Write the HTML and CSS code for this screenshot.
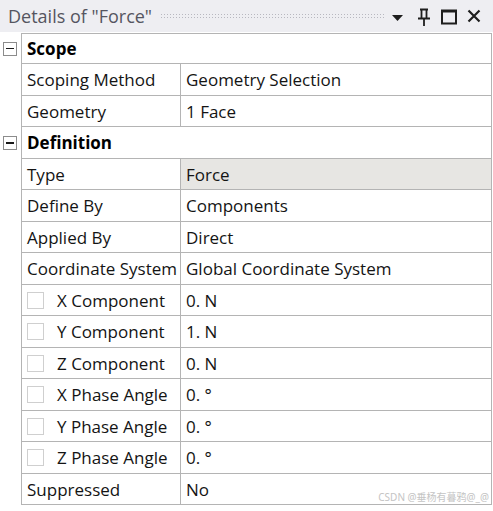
FILE: index.html
```html
<!DOCTYPE html>
<html>
<head>
<meta charset="utf-8">
<link rel="stylesheet" href="styles.css">
</head>
<body>
<div class="panel">
  <div class="titlebar">
    <span class="title">Details of "Force"</span>
    <span class="grip"></span>
    <span class="tb-icons">
      <svg class="ic-drop" width="11" height="6" viewBox="0 0 11 6"><path d="M0 0H11L5.5 6Z" fill="#1e1e1e"/></svg>
      <svg class="ic-pin" width="14" height="18" viewBox="0 0 14 18"><path d="M3 1.5H11M4.5 1.5V10M9.5 1.5V10M1 10.5H13M7 10.5V18" stroke="#1e1e1e" stroke-width="1.8" fill="none"/></svg>
      <svg class="ic-max" width="16" height="16" viewBox="0 0 16 16"><rect x="1" y="1.5" width="14" height="13" stroke="#1e1e1e" stroke-width="2" fill="none"/><path d="M1 2.5H15" stroke="#1e1e1e" stroke-width="2"/></svg>
      <svg class="ic-close" width="14" height="14" viewBox="0 0 14 14"><path d="M1.5 1.5L12.5 12.5M12.5 1.5L1.5 12.5" stroke="#1e1e1e" stroke-width="2.2"/></svg>
    </span>
  </div>
  <div class="sheet">
    <div class="row first">
      <div class="gut"><span class="exp"></span></div>
      <div class="cat">Scope</div>
    </div>
    <div class="row">
      <div class="gut"></div>
      <div class="name">Scoping Method</div>
      <div class="val">Geometry Selection</div>
    </div>
    <div class="row">
      <div class="gut"></div>
      <div class="name">Geometry</div>
      <div class="val">1 Face</div>
    </div>
    <div class="row">
      <div class="gut"><span class="exp"></span></div>
      <div class="cat">Definition</div>
    </div>
    <div class="row">
      <div class="gut"></div>
      <div class="name">Type</div>
      <div class="val shaded">Force</div>
    </div>
    <div class="row">
      <div class="gut"></div>
      <div class="name">Define By</div>
      <div class="val">Components</div>
    </div>
    <div class="row">
      <div class="gut"></div>
      <div class="name">Applied By</div>
      <div class="val">Direct</div>
    </div>
    <div class="row">
      <div class="gut"></div>
      <div class="name">Coordinate System</div>
      <div class="val">Global Coordinate System</div>
    </div>
    <div class="row">
      <div class="gut"></div>
      <div class="name chk"><span class="box"></span>X Component</div>
      <div class="val">0. N</div>
    </div>
    <div class="row">
      <div class="gut"></div>
      <div class="name chk"><span class="box"></span>Y Component</div>
      <div class="val">1. N</div>
    </div>
    <div class="row">
      <div class="gut"></div>
      <div class="name chk"><span class="box"></span>Z Component</div>
      <div class="val">0. N</div>
    </div>
    <div class="row">
      <div class="gut"></div>
      <div class="name chk"><span class="box"></span>X Phase Angle</div>
      <div class="val">0. °</div>
    </div>
    <div class="row">
      <div class="gut"></div>
      <div class="name chk"><span class="box"></span>Y Phase Angle</div>
      <div class="val">0. °</div>
    </div>
    <div class="row">
      <div class="gut"></div>
      <div class="name chk"><span class="box"></span>Z Phase Angle</div>
      <div class="val">0. °</div>
    </div>
    <div class="row last">
      <div class="gut"></div>
      <div class="name">Suppressed</div>
      <div class="val">No<span class="mark">CSDN @垂杨有暮鸦@_@</span></div>
    </div>
  </div>
</div>
</body>
</html>
```
FILE: styles.css
```css
html, body {
  margin: 0;
  padding: 0;
  background: #ffffff;
}
body {
  font-family: "Open Sans", "Noto Sans", "Noto Sans CJK SC", sans-serif;
  font-size: 17px;
  color: #141414;
  width: 493px;
  height: 511px;
  overflow: hidden;
}
.titlebar {
  height: 32px;
  background: #eeeef2;
  display: flex;
  align-items: center;
  padding-left: 8px;
  box-sizing: border-box;
}
.title {
  font-size: 18px;
  color: #555560;
  white-space: nowrap;
}
.grip {
  flex: 1;
  height: 7px;
  margin: 1px 6px 0 8px;
  background-image: radial-gradient(circle, #b8b8c0 0.8px, transparent 1px);
  background-size: 3px 3px;
}
.tb-icons {
  display: flex;
  align-items: center;
  padding-right: 12px;
}
.ic-drop { margin-right: 14px; margin-top: 3px; }
.ic-pin { margin-right: 10px; margin-top: 2px; }
.ic-max { margin-right: 10px; margin-top: 1px; }
.ic-close { margin-top: 0px; }

.sheet {
  margin-top: 1px;
  width: 492px;
}
.row {
  display: grid;
  grid-template-columns: 21px 160px 311px;
  height: 31px;
}
.row:nth-child(even) {
  height: 32px;
}
.gut {
  display: flex;
  align-items: center;
  justify-content: flex-start;
}
.exp {
  width: 14px;
  height: 14px;
  margin-left: 3px;
  box-sizing: border-box;
  border: 1px solid #8c8c8c;
  background: #fff;
  display: flex;
  align-items: center;
  justify-content: center;
}
.exp::after {
  content: "";
  width: 8px;
  height: 1.6px;
  background: #1a1a1a;
}
.name, .val, .cat {
  display: flex;
  align-items: center;
  white-space: nowrap;
  border-bottom: 1px solid #b4b4b4;
  border-right: 1px solid #b4b4b4;
  box-sizing: border-box;
  overflow: hidden;
}
.name, .cat {
  border-left: 1px solid #b4b4b4;
  padding-left: 5px;
}
.val {
  padding-left: 5px;
  position: relative;
  overflow: visible;
}
.cat {
  grid-column: 2 / span 2;
  font-weight: bold;
  color: #000;
}
.first .cat {
  border-top: 1px solid #b4b4b4;
}
.shaded {
  background: #e7e6e3;
}
.chk {
  padding-left: 5px;
}
.box {
  width: 17px;
  height: 17px;
  box-sizing: border-box;
  border: 1px solid #cfcfcf;
  background: #fff;
  margin-right: 13px;
  flex: none;
}
.mark {
  position: absolute;
  right: 2px;
  bottom: 2px;
  font-family: "Noto Sans", "Noto Sans CJK SC", sans-serif;
  font-size: 10px;
  color: #c4c4c4;
  line-height: 1;
}
```
